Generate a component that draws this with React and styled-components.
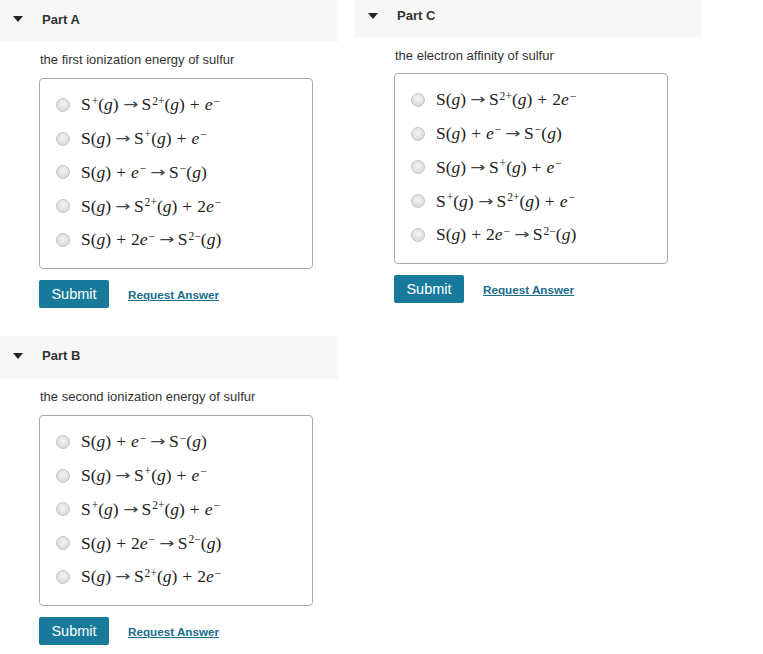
import React from "react";
import styled, { createGlobalStyle } from "styled-components";

const Global = createGlobalStyle`
  html, body { margin: 0; padding: 0; background: #fff; }
  body { font-family: Arial, "Liberation Sans", sans-serif; color: #333; }
`;

const Page = styled.div`
  display: flex;
  align-items: flex-start;
  gap: 17px;
  width: 763px;
`;

const Column = styled.div`
  display: flex;
  flex-direction: column;
  width: ${(p) => p.width}px;
`;

const Part = styled.section`
  display: flex;
  flex-direction: column;
  margin-bottom: ${(p) => p.gapBelow || 0}px;
`;

const Header = styled.div`
  display: flex;
  align-items: center;
  height: ${(p) => p.height}px;
  padding-bottom: ${(p) => (p.height > 40 ? 4 : 6)}px;
  box-sizing: border-box;
  background: #f7f7f7;
  padding-left: 13px;
`;

const Caret = styled.span`
  width: 0;
  height: 0;
  border-left: 5px solid transparent;
  border-right: 5px solid transparent;
  border-top: 6px solid #222;
  margin-right: 19px;
`;

const Title = styled.h3`
  margin: 0;
  font-size: 13px;
  font-weight: bold;
  color: #333;
`;

const Body = styled.div`
  padding: 0 0 0 39px;
  display: flex;
  flex-direction: column;
`;

const Prompt = styled.p`
  margin: ${(p) => (p.tight ? 11 : 10)}px 0 ${(p) => (p.tight ? 10 : 11)}px 1px;
  font-size: 13px;
  line-height: 15px;
  color: #333;
`;

const Choices = styled.div`
  width: 274px;
  height: 191px;
  box-sizing: border-box;
  border: 1px solid #aaa;
  border-radius: 4px;
  padding: 9px 0 0 16px;
  display: flex;
  flex-direction: column;
`;

const Choice = styled.label`
  display: flex;
  align-items: center;
  height: 33.75px;
  cursor: pointer;
`;

const Radio = styled.span`
  width: 12px;
  height: 12px;
  border-radius: 50%;
  border: 1px solid #c4c4c4;
  background: radial-gradient(circle at 50% 40%, #f4f4f4 0%, #dcdcdc 70%, #cfcfcf 100%);
  margin-right: 11px;
  flex-shrink: 0;
`;

const Math = styled.span`
  font-family: "Liberation Serif", "Times New Roman", serif;
  font-size: 17.5px;
  color: #222;
  white-space: nowrap;
`;

const It = styled.i`
  font-style: italic;
`;

const Sup = styled.sup`
  font-size: 0.66em;
  vertical-align: 0;
  position: relative;
  top: -0.5em;
  line-height: 0;
  margin-left: 1px;
`;

const Op = styled.span`
  margin: 0 5px;
`;

const Arrow = styled.span`
  display: inline-block;
  font-family: "DejaVu Sans", sans-serif;
  font-size: 14px;
  color: #444;
  transform: scaleX(1.3);
  margin: 0 5px 0 6px;
  position: relative;
  top: -1px;
`;

const Actions = styled.div`
  display: flex;
  align-items: center;
  gap: 19px;
  margin-top: 11px;
`;

const SubmitButton = styled.button`
  width: 70px;
  height: 28px;
  border: none;
  border-radius: 2px;
  background: #177a9a;
  color: #fff;
  font-family: Arial, "Liberation Sans", sans-serif;
  font-size: 14.5px;
  padding: 0;
  cursor: pointer;
`;

const RequestLink = styled.a`
  font-size: 11.7px;
  font-weight: bold;
  color: #1a6d8c;
  text-decoration: underline;
  text-underline-offset: 1px;
  cursor: pointer;
`;

function Species({ token }) {
  const m = token.match(/^(\d*)(S|e)(?:\^([^()]+))?(\(g\))?$/);
  if (!m) return <span>{token}</span>;
  const [, coef, base, charge, phase] = m;
  return (
    <span>
      {coef}
      {base === "e" ? <It>e</It> : base}
      {charge && <Sup>{charge.replace("-", "−")}</Sup>}
      {phase && (
        <>
          (<It>g</It>)
        </>
      )}
    </span>
  );
}

function Equation({ text }) {
  return (
    <Math>
      {text.split(" ").map((t, i) =>
        t === "+" ? (
          <Op key={i}>+</Op>
        ) : t === "->" ? (
          <Arrow key={i}>→</Arrow>
        ) : (
          <Species key={i} token={t} />
        )
      )}
    </Math>
  );
}

function Question({ title, prompt, options, headerHeight, gapBelow, tight }) {
  return (
    <Part gapBelow={gapBelow}>
      <Header height={headerHeight}>
        <Caret />
        <Title>{title}</Title>
      </Header>
      <Body>
        <Prompt tight={tight}>{prompt}</Prompt>
        <Choices>
          {options.map((o) => (
            <Choice key={o}>
              <Radio />
              <Equation text={o} />
            </Choice>
          ))}
        </Choices>
        <Actions>
          <SubmitButton>Submit</SubmitButton>
          <RequestLink>Request Answer</RequestLink>
        </Actions>
      </Body>
    </Part>
  );
}

const partA = [
  "S^+(g) -> S^2+(g) + e^-",
  "S(g) -> S^+(g) + e^-",
  "S(g) + e^- -> S^-(g)",
  "S(g) -> S^2+(g) + 2e^-",
  "S(g) + 2e^- -> S^2-(g)",
];

const partB = [
  "S(g) + e^- -> S^-(g)",
  "S(g) -> S^+(g) + e^-",
  "S^+(g) -> S^2+(g) + e^-",
  "S(g) + 2e^- -> S^2-(g)",
  "S(g) -> S^2+(g) + 2e^-",
];

const partC = [
  "S(g) -> S^2+(g) + 2e^-",
  "S(g) + e^- -> S^-(g)",
  "S(g) -> S^+(g) + e^-",
  "S^+(g) -> S^2+(g) + e^-",
  "S(g) + 2e^- -> S^2-(g)",
];

export default function App() {
  return (
    <>
      <Global />
      <Page>
        <Column width={338}>
          <Question
            title="Part A"
            prompt="the first ionization energy of sulfur"
            options={partA}
            headerHeight={42}
            gapBelow={28}
          />
          <Question
            title="Part B"
            prompt="the second ionization energy of sulfur"
            options={partB}
            headerHeight={43}
          />
        </Column>
        <Column width={347}>
          <Question
            title="Part C"
            prompt="the electron affinity of sulfur"
            options={partC}
            headerHeight={37}
            tight
          />
        </Column>
      </Page>
    </>
  );
}
